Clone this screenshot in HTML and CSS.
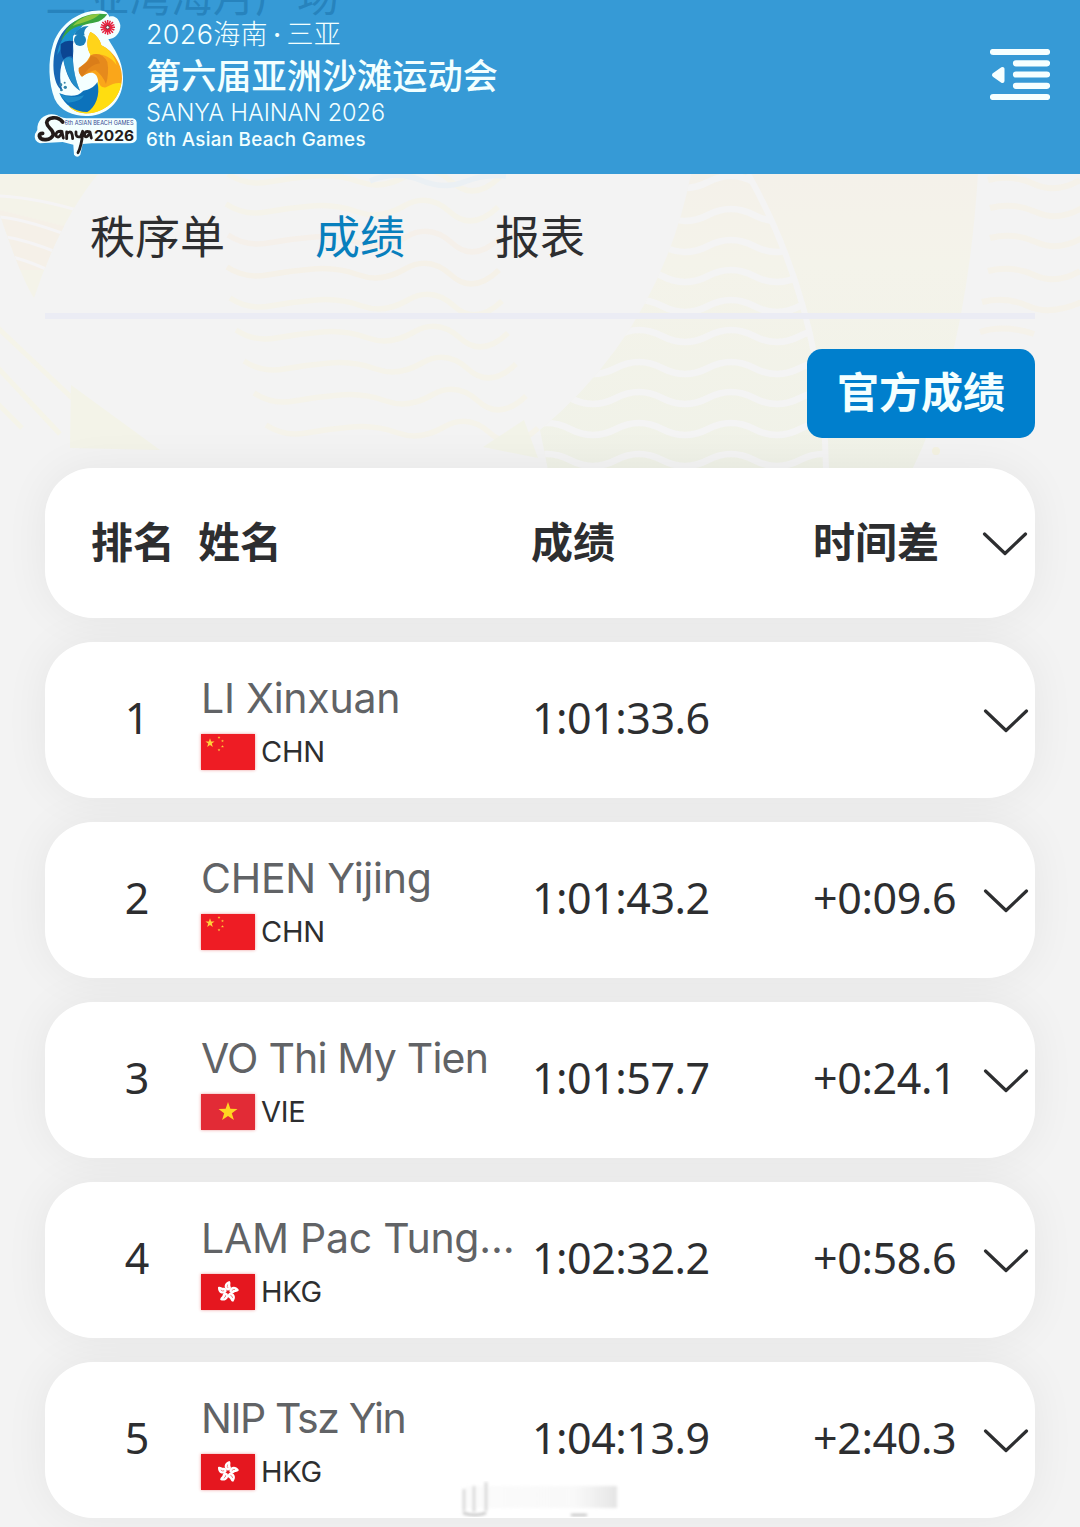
FILE: index.html
```html
<!DOCTYPE html>
<html lang="zh-CN">
<head>
<meta charset="utf-8">
<title>第六届亚洲沙滩运动会 - 成绩</title>
<link rel="stylesheet" href="styles.css">
</head>
<body>
<svg class="symbols" width="0" height="0">
  <defs>
    <path id="star" d="M0-10 2.35-3.2 9.5-3.1 3.8 1.2 5.9 8.1 0 4-5.9 8.1-3.8 1.2-9.5-3.1-2.35-3.2Z"/>
    <symbol id="chevron" viewBox="0 0 46 26"><path d="M2.500 3 23 22.500 43.500 3" fill="none" stroke="#2d2e30" stroke-width="3.200" stroke-linecap="round" stroke-linejoin="round"/></symbol>
    <symbol id="flag-chn" viewBox="0 0 54 36"><path fill="#ee1c24" d="M0 0h54v36H0z"/><g fill="#ffd03b"><use href="#star" transform="translate(9 9) scale(.48)"/><use href="#star" transform="translate(18 3.500) scale(.15)"/><use href="#star" transform="translate(21.500 7) scale(.15)"/><use href="#star" transform="translate(21.500 12.500) scale(.15)"/><use href="#star" transform="translate(18 16) scale(.15)"/></g></symbol>
    <symbol id="flag-vie" viewBox="0 0 54 36"><path fill="#e22b36" d="M0 0h54v36H0z"/><use href="#star" fill="#ffd521" transform="translate(27 18)"/></symbol>
    <g id="petal"><path fill="#fff" d="M-.5-1.500C-5-4-4-9.500 1.500-11 3.500-9 1.500-7.500 2.800-5 3.500-3 1.500-1.500-.5-1.500Z"/><path d="M0-4Q-1.300-5.500-.3-7.500" fill="none" stroke="#e5171f" stroke-width=".5"/></g>
    <symbol id="flag-hkg" viewBox="0 0 54 36"><path fill="#e5171f" d="M0 0h54v36H0z"/><g transform="translate(27 18)"><use href="#petal"/><use href="#petal" transform="rotate(72)"/><use href="#petal" transform="rotate(144)"/><use href="#petal" transform="rotate(216)"/><use href="#petal" transform="rotate(288)"/></g></symbol>
  </defs>
</svg>

<svg class="backdrop" viewBox="0 0 1080 1527">
  <defs>
    <linearGradient id="sailFill" x1="0" y1="0" x2="0" y2="1"><stop offset="0" stop-color="#f4f1ea"/><stop offset=".3" stop-color="#f4f3ea"/><stop offset="1" stop-color="#f0f2e8"/></linearGradient>
    <clipPath id="sailClip"><path d="M691 174Q660 330 540 430L548 470H826Q824 310 745 174Z"/></clipPath>
    <clipPath id="fanClip"><path d="M0 174H98Q60 220 34 298Q22 280 0 215Z"/></clipPath>
    <path id="wave" d="M0 0Q18 12 40 8T86 2T132 8T178 2T224 8T272 3"/>
  </defs>
  <g clip-path="url(#fanClip)"><path fill="#f4f3e9" d="M0 174h100v130H0z"/><path fill="#f5f0e8" d="M0 210l80 20v40H0z"/><g fill="none" stroke="#f5f4f5" stroke-width="3"><path d="M0 196Q40 198 90 214M0 217Q30 220 80 240M0 236Q30 240 70 258M0 254Q30 260 60 276"/></g></g>
  <g fill="none" stroke="#f5f4e9" stroke-width="5"><path d="M-2 328 72 398M-2 368 60 434M-4 402 22 428"/></g>
  <path fill="#f3f3e8" d="M71 385 160 450 70 448Z"/>
  <g fill="none" stroke="#f5f3ea" stroke-width="5.500">
    <use href="#wave" x="228" y="174"/><use href="#wave" x="226" y="204"/><use href="#wave" x="228" y="235" stroke="#f5f0ea"/><use href="#wave" x="227" y="267" stroke="#f5f1e8"/><use href="#wave" x="230" y="298"/><use href="#wave" x="236" y="330"/><use href="#wave" x="244" y="361"/><use href="#wave" x="254" y="393"/><use href="#wave" x="266" y="425"/>
    <path stroke="#ebf0f4" d="M370 181Q396 170 420 180T464 182T506 176"/>
  </g>
  <path fill="url(#sailFill)" d="M691 174Q660 330 540 430L548 470H912Q966 360 978 174Z"/>
  <path fill="none" stroke="#f4f4f4" stroke-width="6" d="M748 174Q824 310 826 470"/>
  <g clip-path="url(#sailClip)" fill="none" stroke="#f4f4f4" stroke-width="6.500">
    <path d="M524 182q23-12 46 0t46 0 46 0 46 0 46 0 46 0 46 0M524 215q23-12 46 0t46 0 46 0 46 0 46 0 46 0 46 0M524 246q23-12 46 0t46 0 46 0 46 0 46 0 46 0 46 0M524 276q23-12 46 0t46 0 46 0 46 0 46 0 46 0 46 0M524 306q23-12 46 0t46 0 46 0 46 0 46 0 46 0 46 0M524 336q23-12 46 0t46 0 46 0 46 0 46 0 46 0 46 0M524 368q23-12 46 0t46 0 46 0 46 0 46 0 46 0 46 0M524 398q23-12 46 0t46 0 46 0 46 0 46 0 46 0 46 0M524 429q23-12 46 0t46 0 46 0 46 0 46 0 46 0 46 0M524 460q23-12 46 0t46 0 46 0 46 0 46 0 46 0 46 0"/>
  </g>
  <path fill="#f2f3e8" d="M483 447 524 420 538 458Z"/>
  <g fill="none" stroke="#f5f2ea" stroke-width="6"><path d="M988 180q24-6 46 4t46-4M990 208q24-6 46 4t46-4M990 238q24-6 46 4t46-4M988 271q24-6 46 4t46-4M982 302q24-6 46 4t54-4M980 332q24-8 54 2"/></g>
  <circle cx="936" cy="451" r="4" fill="#f4f2e2"/>
</svg>

<header class="topbar">
  <div class="venue">三亚湾海月广场</div>
  <svg class="emblem" viewBox="0 0 106 150">
    <g transform="translate(-14 -9) scale(.33333)">
      <path fill="#f4ffff" d="M245 32C190 28 125 62 100 130 82 185 86 250 104 297 122 335 165 350 205 348 268 345 312 295 309 230 307 180 284 150 265 118 285 116 302 100 301 76 297 52 280 46 268 50 264 38 256 33 245 32Z"/>
      <path fill="#f4ffff" d="M52 390C50 355 82 334 112 346 124 354 134 355 150 355H338Q352 358 350 374V418Q346 430 330 430H216L188 432Q184 450 181 464 172 476 162 464L160 434 128 426 60 430Q40 422 45 402Z"/>
      <path fill="#1767b4" d="M168 62C110 90 92 170 104 232 109 255 118 268 128 272 116 240 120 200 130 180 138 220 152 256 180 272 164 236 156 190 160 152L158 110 180 72Z"/>
      <path fill="#3aa53f" d="M262 43C220 36 172 48 140 86L122 122C148 98 165 82 190 76 215 66 240 74 262 43Z"/>
      <path fill="#8cc63f" d="M240 42C208 40 175 56 158 78 190 66 218 62 240 42Z"/>
      <path fill="#1b93cf" d="M190 76C150 80 118 115 112 165 124 140 142 126 158 122L160 104Z"/>
      <path fill="#0b4592" d="M122 132Q140 118 160 124 156 150 159 172 148 162 131 178 120 164 122 132Z"/>
      <path fill="#2aa2d4" d="M130 180Q144 164 158 176 162 230 180 272 146 250 130 180Z" opacity=".65"/>
      <circle cx="180" cy="120" r="18" fill="#1b80bb"/>
      <path fill="#1b80bb" d="M162 104Q176 78 206 78 188 90 194 106Z"/>
      <path fill="#faa61a" d="M211 96C228 104 240 118 244 136 282 154 308 196 306 236 302 292 262 334 206 340 176 340 158 332 146 318 190 336 236 300 234 240 228 210 206 216 186 230 174 220 176 204 190 194 204 182 206 174 212 164 198 142 200 116 211 96Z"/>
      <path fill="#ffd41a" d="M211 96C228 104 240 118 244 136 270 148 284 170 290 196 270 166 240 158 212 166 198 142 200 116 211 96Z"/>
      <path fill="#e68a1c" d="M212 166Q244 152 262 186 268 220 258 252 248 226 226 210 208 214 186 230 174 220 176 204 190 194 208 180 212 166Z"/>
      <path fill="#c96a17" d="M212 168Q234 168 240 190 212 194 196 218L186 229Q174 218 178 204 204 188 212 168Z" opacity=".4"/>
      <path fill="#ffdd10" d="M234 240Q240 266 258 262 286 246 304 250C296 300 254 338 206 340 180 342 160 332 146 318 196 336 232 292 234 240Z"/>
      <path fill="#0c72bb" d="M118 280C150 292 174 290 190 272 206 270 222 262 232 246 242 286 226 322 202 336 164 336 136 318 118 280Z"/>
      <path fill="#2b9fd2" d="M118 280Q150 298 192 286 184 306 144 308 128 298 118 280Z" opacity=".6"/>
      <g fill="#3286aa"><circle cx="122" cy="254" r="5"/><circle cx="136" cy="262" r="5"/><circle cx="124" cy="270" r="4"/><circle cx="134" cy="248" r="3"/></g>
      <g stroke="#e52541" stroke-width="4.500" transform="translate(263 82)"><path d="M-22 0H22M0-22V22M-16-16 16 16M-16 16 16-16M-8-20 8 20M8-20-8 20M-20-8 20 8M-20 8 20-8"/><circle r="11" fill="#e52541" stroke="none"/><circle r="5" fill="#fff" stroke="#222" stroke-width="2"/></g>
      <g fill="none" stroke="#241c1b" stroke-linecap="round" stroke-linejoin="round">
        <path d="M128 366C112 346 82 352 80 368 82 386 100 386 100 404 92 422 62 424 58 408 58 402 62 400 68 400" stroke-width="11"/>
        <path d="M126 394Q106 392 108 408 118 418 126 396L130 414M140 396V416M140 402Q156 384 158 416M168 396Q166 414 182 410L188 394M188 400Q184 440 174 458M210 396Q192 390 194 408 202 416 210 396L214 414" stroke-width="8.500"/>
      </g>
    </g>
    <text x="30.500" y="116.200" textLength="69" lengthAdjust="spacingAndGlyphs" class="emblem-small">6th ASIAN BEACH GAMES</text>
    <text x="60" y="131.500" textLength="40" lengthAdjust="spacingAndGlyphs" class="emblem-year">2026</text>
  </svg>
  <div class="event">
    <div class="event-place">2026海南<span class="dot">·</span>三亚</div>
    <div class="event-name">第六届亚洲沙滩运动会</div>
    <div class="event-place-en">SANYA HAINAN 2026</div>
    <div class="event-name-en">6th Asian Beach Games</div>
  </div>
  <svg class="menu" viewBox="0 0 60 51"><g stroke="#f6ffff" stroke-width="6.200" stroke-linecap="round"><path d="M3 3H57M26 14.300H57M26 25.500H57M26 36.800H57M3 48H57"/></g><path d="M4 26 12.500 20V32Z" fill="#f6ffff" stroke="#f6ffff" stroke-width="4" stroke-linejoin="round"/></svg>
</header>

<main>
  <nav class="tabs"><a>秩序单</a><a class="active">成绩</a><a>报表</a></nav>
  <div class="actions"><button class="official">官方成绩</button></div>
  <section class="results">
    <div class="card heading"><span class="rank">排名</span><span>姓名</span><span>成绩</span><span>时间差</span><svg class="chevron"><use href="#chevron"/></svg></div>
    <div class="card"><span class="rank">1</span><div class="athlete"><div class="name">LI Xinxuan</div><div class="team"><svg class="flag"><use href="#flag-chn"/></svg>CHN</div></div><span class="time">1:01:33.6</span><span class="gap"></span><svg class="chevron"><use href="#chevron"/></svg></div>
    <div class="card"><span class="rank">2</span><div class="athlete"><div class="name">CHEN Yijing</div><div class="team"><svg class="flag"><use href="#flag-chn"/></svg>CHN</div></div><span class="time">1:01:43.2</span><span class="gap">+0:09.6</span><svg class="chevron"><use href="#chevron"/></svg></div>
    <div class="card"><span class="rank">3</span><div class="athlete"><div class="name tight">VO Thi My Tien</div><div class="team"><svg class="flag"><use href="#flag-vie"/></svg>VIE</div></div><span class="time">1:01:57.7</span><span class="gap">+0:24.1</span><svg class="chevron"><use href="#chevron"/></svg></div>
    <div class="card"><span class="rank">4</span><div class="athlete"><div class="name">LAM Pac Tung…</div><div class="team"><svg class="flag"><use href="#flag-hkg"/></svg>HKG</div></div><span class="time">1:02:32.2</span><span class="gap">+0:58.6</span><svg class="chevron"><use href="#chevron"/></svg></div>
    <div class="card"><span class="rank">5</span><div class="athlete"><div class="name tighter">NIP Tsz Yin</div><div class="team"><svg class="flag"><use href="#flag-hkg"/></svg>HKG</div></div><span class="time">1:04:13.9</span><span class="gap">+2:40.3</span><svg class="chevron"><use href="#chevron"/></svg></div>
  </section>
</main>
<svg class="smudge" viewBox="0 0 170 36">
  <defs><linearGradient id="smudgeFill" x1="0" x2="1"><stop offset="0" stop-color="#eee" stop-opacity=".2"/><stop offset=".7" stop-color="#eee" stop-opacity=".35"/><stop offset="1" stop-color="#ddd" stop-opacity=".8"/></linearGradient><filter id="soften" x="-10%" y="-20%" width="120%" height="140%"><feGaussianBlur stdDeviation="1.600"/></filter></defs>
  <g filter="url(#soften)"><path d="M8 5h151v22H8z" fill="url(#smudgeFill)"/><path d="M6 8V30M16 5V31M28 1V30" stroke="#d4d4d4" stroke-width="2.500"/><path d="M5 32Q17 36 28 32M113 34h16" fill="none" stroke="#b5b5b5" stroke-width="2"/></g>
</svg>
</body>
</html>
```
FILE: styles.css
```css
* { box-sizing: border-box; }

body {
  position: relative;
  width: 1080px;
  height: 1527px;
  margin: 0;
  overflow: hidden;
  background: #f3f3f3;
  color: #2d2e30;
  font-family: Inter, "Noto Sans CJK SC", sans-serif;
}

.symbols { position: absolute; }

.backdrop {
  position: absolute;
  z-index: -2;
  top: 0;
  left: 0;
  width: 1080px;
  height: 1527px;
}

.topbar {
  position: relative;
  display: flex;
  align-items: flex-start;
  height: 174px;
  padding: 0 30px 0 34px;
  overflow: hidden;
  background: #369ad6;
  color: #f2ffff;
}

.venue {
  position: absolute;
  top: -33px;
  left: 45px;
  color: #2783bd;
  font-size: 42px;
  line-height: 60px;
  white-space: nowrap;
}

.emblem {
  position: relative;
  flex: none;
  width: 106px;
  height: 150px;
  margin-top: 9px;
  overflow: visible;
}

.emblem-small { fill: #334a91; font-size: 6px; }
.emblem-year { fill: #241c1b; font-size: 15px; font-weight: 700; }

.event {
  position: relative;
  display: flex;
  flex-direction: column;
  margin-left: 6px;
  padding-top: 16px;
  white-space: nowrap;
}

.event-place { height: 38px; font-size: 27px; font-weight: 300; letter-spacing: .3px; line-height: 38px; }
.dot { margin: 0 5px; font-weight: 500; }
.event-name { height: 44px; font-size: 35.200px; font-weight: 500; line-height: 44px; }
.event-place-en { height: 28px; font-size: 23.500px; font-weight: 300; letter-spacing: -.05px; line-height: 30px; }
.event-name-en { height: 26px; font-size: 18.800px; font-weight: 500; letter-spacing: .3px; line-height: 27px; }

.menu { width: 60px; height: 51px; margin: 49px 0 0 auto; }

main { padding: 0 45px; }

.tabs {
  display: flex;
  gap: 90px;
  height: 145px;
  padding: 31px 45px 0;
  border-bottom: 6px solid #ebecf4;
  font-size: 45px;
  line-height: 66px;
}

.active { color: #087fbd; }

.actions { display: flex; justify-content: flex-end; padding: 30px 0; }

.official {
  width: 228px;
  height: 89px;
  padding: 0 0 8px;
  border: 0;
  border-radius: 15px;
  background: #007fcd;
  color: #f4ffff;
  font: 700 42px/81px "Noto Sans CJK SC", sans-serif;
}

.results { position: relative; z-index: 0; display: flex; flex-direction: column; gap: 24px; }

.card {
  position: relative;
  display: grid;
  grid-template-columns: 109px 333px 281px 168px 46px;
  align-items: center;
  height: 156px;
  padding-left: 47px;
  border-radius: 48px;
  background: #fff;
  font-size: 42px;
  line-height: 60px;
  white-space: nowrap;
}

.card::before {
  position: absolute;
  z-index: -1;
  inset: 0;
  border-radius: 48px;
  box-shadow: 0 0 45px rgb(0 0 0 / 6%);
  content: "";
}

.heading {
  grid-template-columns: 107px 333px 282px 169px 46px;
  height: 150px;
  padding-bottom: 7px;
  padding-left: 46px;
  font-family: "Noto Sans CJK SC", sans-serif;
  font-weight: 700;
}

.rank { width: 90px; padding-bottom: 3px; text-align: center; }
.heading .rank { padding: 0; text-align: left; }

.athlete { padding-top: 7px; }
.name { height: 56px; color: #616366; font-size: 41px; letter-spacing: -.25px; line-height: 56px; }
.name.tight { letter-spacing: -.8px; }
.name.tighter { letter-spacing: -1.400px; }
.team { display: flex; align-items: center; gap: 6px; height: 52px; font-size: 29px; letter-spacing: -.3px; line-height: 50px; }
.flag { width: 54px; height: 36px; box-shadow: 0 0 3px rgb(220 30 30 / 45%); }
.card:not(.heading) .rank, .time, .gap { padding-bottom: 5px; font-family: "Noto Sans", sans-serif; font-size: 43px; }
.time { margin-left: -2px; letter-spacing: -.5px; }
.gap { margin-left: -2px; letter-spacing: -.4px; }
.chevron { width: 46px; height: 26px; margin-top: 2px; }
.heading .chevron { margin-top: 8px; }

.smudge { position: absolute; top: 1481px; left: 458px; width: 170px; height: 36px; }
```
